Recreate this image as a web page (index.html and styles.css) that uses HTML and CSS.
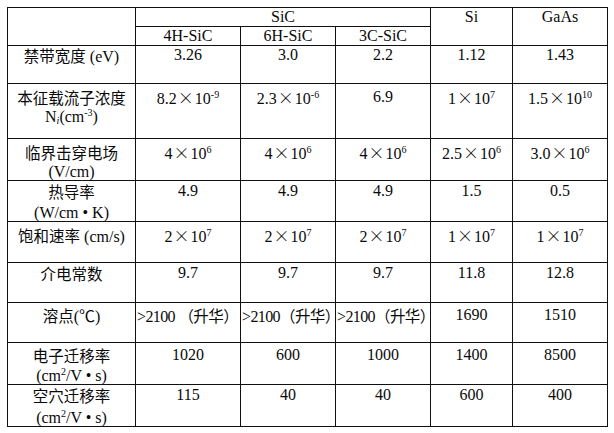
FILE: index.html
```html
<!DOCTYPE html>
<html lang="zh-CN">
<head>
<meta charset="utf-8">
<title>SiC 材料参数</title>
<link rel="stylesheet" href="styles.css">
</head>
<body>
<div class="wrap">
<table class="tbl">
  <colgroup>
    <col class="c-label"><col class="c-4h"><col class="c-6h"><col class="c-3c"><col class="c-si"><col class="c-gaas">
  </colgroup>
  <tr class="hr1">
    <td rowspan="2" class="corner"></td>
    <td colspan="3" class="head-mid">SiC</td>
    <td rowspan="2" class="head-top">Si</td>
    <td rowspan="2" class="head-top">GaAs</td>
  </tr>
  <tr class="hr2">
    <td class="head-mid">4H-SiC</td>
    <td class="head-mid">6H-SiC</td>
    <td class="head-mid">3C-SiC</td>
  </tr>
  <tr class="r1">
    <td class="lab"><span class="zh">禁带宽度</span> (eV)</td><td>3.26</td><td>3.0</td><td>2.2</td><td>1.12</td><td>1.43</td>
  </tr>
  <tr class="r2">
    <td class="lab"><span class="zh">本征载流子浓度</span><span class="l2">N<sub class="sub">i</sub>(cm<sup class="sup">-3</sup>)</span></td>
    <td>8.2<span class="x">×</span>10<sup class="sup">-9</sup></td>
    <td>2.3<span class="x">×</span>10<sup class="sup">-6</sup></td>
    <td>6.9</td>
    <td>1<span class="x">×</span>10<sup class="sup">7</sup></td>
    <td>1.5<span class="x">×</span>10<sup class="sup">10</sup></td>
  </tr>
  <tr class="r3">
    <td class="lab"><span class="zh">临界击穿电场</span><span class="l2">(V/cm)</span></td>
    <td>4<span class="x">×</span>10<sup class="sup">6</sup></td>
    <td>4<span class="x">×</span>10<sup class="sup">6</sup></td>
    <td>4<span class="x">×</span>10<sup class="sup">6</sup></td>
    <td>2.5<span class="x">×</span>10<sup class="sup">6</sup></td>
    <td>3.0<span class="x">×</span>10<sup class="sup">6</sup></td>
  </tr>
  <tr class="r4">
    <td class="lab"><span class="zh">热导率</span><span class="l2">(W/cm • K)</span></td><td>4.9</td><td>4.9</td><td>4.9</td><td>1.5</td><td>0.5</td>
  </tr>
  <tr class="r5">
    <td class="lab"><span class="zh">饱和速率</span> (cm/s)</td>
    <td>2<span class="x">×</span>10<sup class="sup">7</sup></td>
    <td>2<span class="x">×</span>10<sup class="sup">7</sup></td>
    <td>2<span class="x">×</span>10<sup class="sup">7</sup></td>
    <td>1<span class="x">×</span>10<sup class="sup">7</sup></td>
    <td>1<span class="x">×</span>10<sup class="sup">7</sup></td>
  </tr>
  <tr class="r6">
    <td class="lab"><span class="zh">介电常数</span></td><td>9.7</td><td>9.7</td><td>9.7</td><td>11.8</td><td>12.8</td>
  </tr>
  <tr class="r7">
    <td class="lab"><span class="zh">溶点</span>(℃)</td>
    <td class="subl">&gt;2100 <span class="zh">（升华）</span></td>
    <td class="subl">&gt;2100<span class="zh">（升华）</span></td>
    <td class="subl">&gt;2100<span class="zh">（升华）</span></td>
    <td>1690</td><td>1510</td>
  </tr>
  <tr class="r8">
    <td class="lab"><span class="zh">电子迁移率</span><span class="l2">(cm<sup class="sup">2</sup>/V • s)</span></td><td>1020</td><td>600</td><td>1000</td><td>1400</td><td>8500</td>
  </tr>
  <tr class="r9">
    <td class="lab"><span class="zh">空穴迁移率</span><span class="l2">(cm<sup class="sup">2</sup>/V • s)</span></td><td>115</td><td>40</td><td>40</td><td>600</td><td>400</td>
  </tr>
</table>
</div>
</body>
</html>
```

FILE: styles.css
```css
body {
  margin: 0;
  background: #ffffff;
}

.wrap {
  padding: 7px 0 0 7px;
}

.tbl {
  border-collapse: collapse;
  table-layout: fixed;
  width: 600px;
  font-family: "Liberation Serif", serif;
  font-size: 16px;
  color: #0a0a0a;
}

.c-label { width: 128px; }
.c-4h { width: 105px; }
.c-6h { width: 95px; }
.c-3c { width: 95px; }
.c-si { width: 82px; }
.c-gaas { width: 95px; }

.tbl td {
  border: 1.5px solid #101010;
  padding: 2px 0 0;
  vertical-align: top;
  text-align: center;
  line-height: 16px;
  white-space: nowrap;
}

.l2 {
  display: block;
  margin-top: 2px;
}

.tbl td.head-mid {
  vertical-align: middle;
  padding: 0;
  line-height: 16px;
}

.tbl td.head-top {
  padding-top: 1px;
}

.hr1 { height: 19px; }
.hr2 { height: 19px; }

.r1 { height: 38px; }
.r1 td { padding-top: 1px; }

.r2 { height: 55px; }
.r2 td { padding-top: 5px; }

.r3 { height: 41px; }
.r3 td { padding-top: 5px; }

.r4 { height: 41px; }
.r4 td { padding-top: 2px; }
.r4 .l2 { margin-top: 4px; }

.r5 { height: 41px; }
.r5 td { padding-top: 5px; }

.r6 { height: 40px; }
.r6 td { padding-top: 2px; }

.r7 { height: 40px; }
.r7 td { padding-top: 4px; }

.r8 { height: 42px; }
.r8 td { padding-top: 4px; }
.r8 .l2 { margin-top: 3px; }

.r9 { height: 41px; }
.r9 td { padding-top: 2px; }
.r9 .l2 { margin-top: 5px; }

.zh {
  font-family: "Noto Sans CJK SC", sans-serif;
  font-size: 15.5px;
}

.x {
  font-family: "Noto Sans CJK SC", sans-serif;
  font-weight: 300;
  margin: 0 1px;
}

.sup {
  font-size: 10px;
  line-height: 0;
  vertical-align: 6px;
}

.sub {
  font-size: 10px;
  font-style: italic;
  line-height: 0;
  vertical-align: -2px;
}

.tbl td.subl {
  text-align: left;
  padding-left: 1px;
  letter-spacing: -0.6px;
}
```
